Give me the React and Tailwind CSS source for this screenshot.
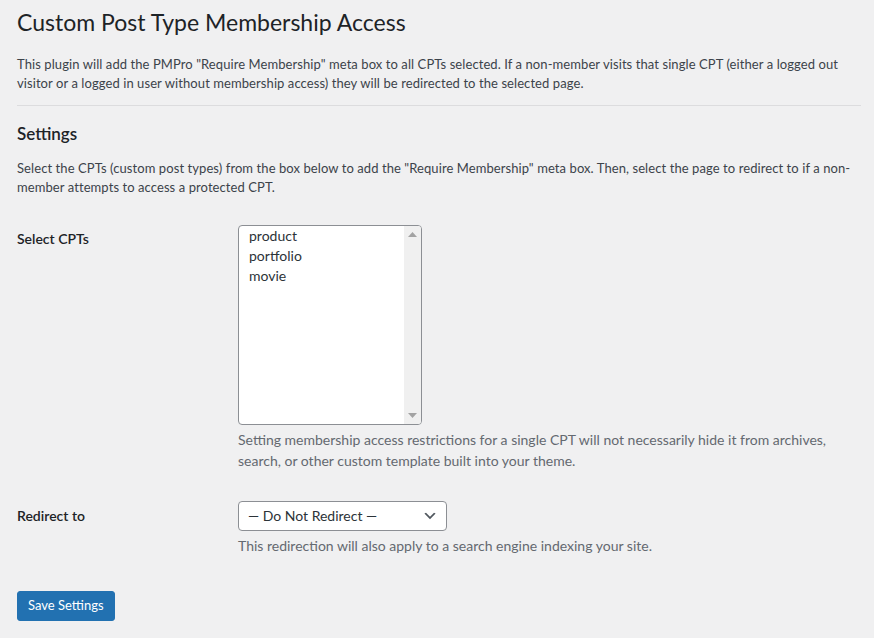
import React from 'react';

const CPTS = ['product', 'portfolio', 'movie'];

function Chevron() {
  return (
    <svg width="16" height="16" viewBox="0 0 20 20" className="shrink-0">
      <path d="M5 6l5 5 5-5 2 1-7 7-7-7z" fill="#50575e" />
    </svg>
  );
}

function Triangle({ down }) {
  return (
    <svg width="9" height="5" viewBox="0 0 9 5">
      <path d={down ? 'M0 0h9L4.5 5z' : 'M4.5 0L9 5H0z'} fill="#a3a3a3" />
    </svg>
  );
}

export default function App() {
  return (
    <div className="min-h-[638px] bg-[#f0f0f1] pl-[17px] pr-[13px] pt-[7px] font-[Lato,sans-serif] text-[13px] leading-[19.5px] text-[#3c434a]">
      <h1 className="text-[23px] leading-[30px] font-normal text-[#1d2327]">
        Custom Post Type Membership Access
      </h1>
      <p className="mt-[17.5px] tracking-[0.08px]">
        This plugin will add the PMPro "Require Membership" meta box to all CPTs selected. If a non-member visits that single CPT (either a logged out
        <br />
        visitor or a logged in user without membership access) they will be redirected to the selected page.
      </p>
      <hr className="mt-[11px] border-0 border-t border-[#dcdcde]" />

      <h2 className="mt-[17px] text-[17px] leading-[22px] font-semibold text-[#1d2327]">Settings</h2>
      <p className="mt-[14px] tracking-[0.08px]">
        Select the CPTs (custom post types) from the box below to add the "Require Membership" meta box. Then, select the page to redirect to if a non-
        <br />
        member attempts to access a protected CPT.
      </p>

      {/* Select CPTs row */}
      <div className="mt-[27px] flex">
        <div className="w-[221px] shrink-0 pt-[3.5px] text-[14px] leading-[21px] font-semibold text-[#1d2327]">
          Select CPTs
        </div>
        <div>
          <div className="flex h-[200px] w-[184px] overflow-hidden rounded-[4px] border border-[#8c8f94] bg-white">
            <ul className="flex-1 pl-[10px] text-[14px] leading-[20px] text-[#2c3338]">
              {CPTS.map((cpt) => (
                <li key={cpt}>{cpt}</li>
              ))}
            </ul>
            <div className="flex w-[17px] flex-col items-center justify-between bg-[#f0f0f0] py-[6px]">
              <Triangle />
              <Triangle down />
            </div>
          </div>
          <p className="mt-[4.5px] text-[14px] leading-[21px] text-[#646970]">
            Setting membership access restrictions for a single CPT will not necessarily hide it from archives,
            <br />
            search, or other custom template built into your theme.
          </p>
        </div>
      </div>

      {/* Redirect row */}
      <div className="mt-[29.5px] flex">
        <div className="w-[221px] shrink-0 pt-[4px] text-[14px] leading-[21px] font-semibold text-[#1d2327]">
          Redirect to
        </div>
        <div>
          <div className="flex h-[30px] w-[209px] items-center justify-between rounded-[4px] border border-[#8c8f94] bg-white pr-[8px] pl-[9px] text-[14px] text-[#2c3338]">
            <span>— Do Not Redirect —</span>
            <Chevron />
          </div>
          <p className="mt-[4.5px] text-[14px] leading-[21px] text-[#646970]">
            This redirection will also apply to a search engine indexing your site.
          </p>
        </div>
      </div>

      <button className="mt-[35px] h-[30px] rounded-[3px] border border-[#2271b1] bg-[#2271b1] px-[10px] text-[13px] text-white">
        Save Settings
      </button>
    </div>
  );
}
